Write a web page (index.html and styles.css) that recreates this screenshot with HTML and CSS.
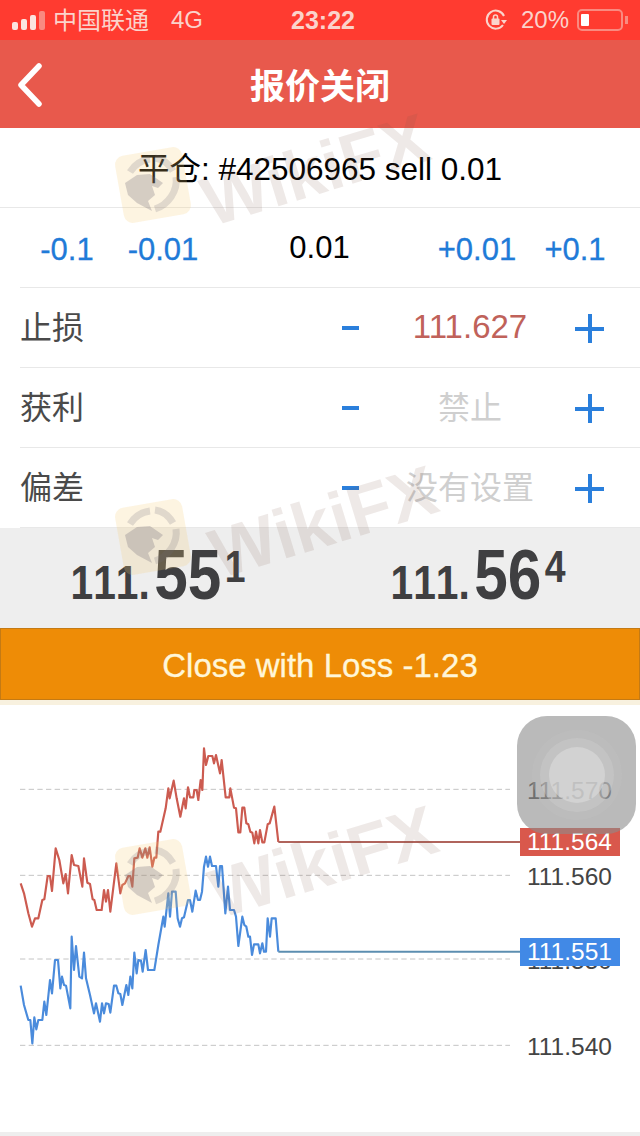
FILE: index.html
```html
<!DOCTYPE html>
<html lang="zh-CN">
<head>
    <meta charset="UTF-8">
    <meta name="viewport" content="width=device-width, initial-scale=1.0">
    <title>报价关闭</title>
    <link rel="stylesheet" href="styles.css">
</head>
<body>
    <svg class="defs" width="0" height="0">
        <symbol id="wm-eagle" viewBox="0 0 80 80">
            <rect x="6" y="6" width="68" height="68" rx="9" transform="rotate(-10 40 40)" fill="rgba(245, 205, 120, .22)"/>
            <g fill="none" stroke="rgba(110, 105, 120, .2)" stroke-width="7">
                <path d="M17 27C22 19 29 15 37 14"/>
                <path d="M42 13C50 14 56 19 60 26"/>
                <path d="M63 32C65 46 55 60 42 64"/>
            </g>
            <path d="M12 38 24 30 37 29 50 38 45 43 39 41 42 50 35 56 39 66 24 58 15 50Z" fill="rgba(110, 105, 120, .28)"/>
        </symbol>
    </svg>

    <div class="page">
        <div class="statusbar">
            <div class="status-left">
                <div class="signal"><i></i><i></i><i></i><i class="off"></i></div>
                <span class="carrier">中国联通</span>
                <span>4G</span>
            </div>
            <div class="time">23:22</div>
            <div class="status-right">
                <svg class="lock" width="24" height="24" viewBox="0 0 24 24">
                    <path d="M19 17A9 9 0 1 1 20 8" fill="none" stroke="currentColor" stroke-width="2"/>
                    <path d="M17 12h6l-3 4z" fill="currentColor"/>
                    <rect x="7.5" y="10.5" width="8" height="6.5" rx="1" fill="currentColor"/>
                    <path d="M9.5 11V9a2 2 0 0 1 4 0v2" fill="none" stroke="currentColor" stroke-width="1.5"/>
                </svg>
                <span>20%</span>
                <div class="battery"><div class="battery-level"></div></div>
            </div>
        </div>

        <div class="navbar">
            <svg class="back" width="28" height="44" viewBox="0 0 28 44">
                <path d="M23 3 5 22l18 19" fill="none" stroke="#fff" stroke-width="5.5" stroke-linecap="round" stroke-linejoin="round"/>
            </svg>
            <div class="nav-title">报价关闭</div>
        </div>

        <div class="order-title">平仓: #42506965 sell 0.01</div>

        <div class="volume-row">
            <div class="step">-0.1</div>
            <div class="step">-0.01</div>
            <div class="volume">0.01</div>
            <div class="step">+0.01</div>
            <div class="step">+0.1</div>
        </div>

        <div class="field-row">
            <div class="field-label">止损</div>
            <div class="minus"></div>
            <div class="field-value loss">111.627</div>
            <div class="plus"></div>
        </div>
        <div class="field-row">
            <div class="field-label">获利</div>
            <div class="minus"></div>
            <div class="field-value">禁止</div>
            <div class="plus"></div>
        </div>
        <div class="field-row">
            <div class="field-label">偏差</div>
            <div class="minus"></div>
            <div class="field-value">没有设置</div>
            <div class="plus"></div>
        </div>

        <div class="prices">
            <div class="price"><span>111.</span><span class="price-big">55</span><sup>1</sup></div>
            <div class="price"><span>111.</span><span class="price-big">56</span><sup>4</sup></div>
        </div>

        <div class="close-btn">Close with Loss -1.23</div>
        <div class="close-shadow"></div>

        <div class="chart">
            <svg class="chart-lines" width="640" height="427" viewBox="0 -15 1920 1281">
                <g class="grid-lines">
                    <line x1="60" y1="238" x2="1530" y2="238"/>
                    <line x1="60" y1="496" x2="1530" y2="496"/>
                    <line x1="60" y1="747" x2="1530" y2="747"/>
                    <line x1="60" y1="1006" x2="1530" y2="1006"/>
                </g>
                <polyline class="line-ask" points="62,520 72,550 85,610 96,650 105,625 115,625 127,570 133,568 143,498 150,498 156,543 167,415 178,450 190,520 197,492 204,550 215,435 222,465 235,468 247,530 252,445 262,518 270,522 278,568 283,570 290,600 305,600 312,540 318,575 324,540 331,605 349,460 361,550 367,525 375,520 385,498 391,498 397,530 403,445 413,443 419,415 427,443 436,415 442,443 449,412 457,470 463,443 469,443 475,365 481,365 497,295 505,235 509,265 521,212 530,265 541,320 552,265 557,295 564,232 570,262 580,262 583,240 590,240 595,270 602,210 607,240 612,115 618,165 625,138 637,138 642,160 648,135 660,190 665,150 677,262 688,262 691,235 702,293 708,295 715,367 721,367 727,293 733,293 739,340 745,343 751,365 757,368 763,400 768,365 775,400 780,360 787,397 793,397 803,343 809,340 823,290 835,396"/>
                <polyline class="line-bid" points="62,827 72,885 85,930 91,930 97,1000 103,922 109,958 115,930 127,930 133,875 139,915 150,810 156,850 165,750 174,750 181,835 186,800 192,825 198,827 211,895 215,680 222,780 228,708 238,800 246,805 252,728 258,805 270,855 282,910 288,880 300,935 306,880 312,910 318,880 326,882 331,908 342,827 349,827 355,850 361,852 367,885 379,825 385,855 391,800 397,835 403,728 410,790 415,750 423,752 428,785 437,720 444,780 463,780 475,705 490,620 494,650 505,550 510,620 516,545 527,545 533,625 540,650 546,625 552,622 564,570 570,570 577,605 587,542 594,570 600,570 606,545 612,470 618,440 624,470 630,440 636,468 648,468 655,530 660,468 666,468 676,610 684,530 690,600 702,600 708,620 715,708 727,620 733,645 739,650 745,680 750,680 756,735 762,703 775,703 780,730 787,700 792,725 798,725 803,625 810,680 815,625 827,625 835,725"/>
                <line class="last-ask" x1="835" y1="396" x2="1560" y2="396"/>
                <line class="last-bid" x1="835" y1="725" x2="1560" y2="725"/>
            </svg>
            <!-- y axis labels sit at the value they mark -->
            <div class="axis-label l570">111.570</div>
            <div class="axis-label l560">111.560</div>
            <div class="axis-label l550">111.550</div>
            <div class="axis-label l540">111.540</div>
            <div class="tag tag-ask">111.564</div>
            <div class="tag tag-bid">111.551</div>
        </div>
        <div class="bottom-strip"></div>
    </div>

    <div class="touch-btn">
        <div class="touch-ring3"><div class="touch-ring2"><div class="touch-ring1"></div></div></div>
    </div>

    <div class="wm wm1">
        <svg class="wm-logo" width="80" height="80"><use href="#wm-eagle"/></svg>
        <div class="wm-text">WikiFX</div>
    </div>
    <div class="wm wm2">
        <svg class="wm-logo" width="80" height="80"><use href="#wm-eagle"/></svg>
        <div class="wm-text">WikiFX</div>
    </div>
    <div class="wm wm3">
        <svg class="wm-logo" width="80" height="80"><use href="#wm-eagle"/></svg>
        <div class="wm-text">WikiFX</div>
    </div>
</body>
</html>
```

FILE: styles.css
```css
body {
    margin: 0;
    background: #fff;
    font-family: "Liberation Sans", "Noto Sans CJK SC", sans-serif;
    color: #000;
    overflow: hidden;
}
.defs {
    position: absolute;
}
.page {
    position: relative;
    width: 640px;
    height: 1136px;
    display: flex;
    flex-direction: column;
}
.statusbar {
    height: 40px;
    flex: none;
    box-sizing: border-box;
    background: #ff3b30;
    color: #fbd3cb;
    font-size: 24px;
    display: grid;
    grid-template-columns: 279px 67px 1fr;
    align-items: center;
    padding: 0 10px 0 12px;
}
.status-left {
    display: flex;
    align-items: center;
}
.signal {
    display: flex;
    align-items: flex-end;
    gap: 3px;
    height: 19px;
    margin-right: 8px;
}
.signal i {
    display: block;
    width: 6px;
    background: #fbe4df;
    border-radius: 2px;
}
.signal i:nth-child(1) { height: 8px; }
.signal i:nth-child(2) { height: 11px; }
.signal i:nth-child(3) { height: 15px; }
.signal i:nth-child(4) { height: 19px; }
.signal i.off { background: #f98a80; }
.carrier {
    font-size: 24px;
    margin: -4px 22px 0 0;
}
.time {
    font-weight: bold;
    font-size: 25px;
    white-space: nowrap;
}
.status-right {
    display: flex;
    align-items: center;
    justify-content: flex-end;
}
.lock {
    margin-right: 13px;
}
.battery {
    position: relative;
    width: 46px;
    height: 22px;
    margin: 0 7px 0 8px;
    box-sizing: border-box;
    border: 2px solid #f98a80;
    border-radius: 5px;
    padding: 3px 2px;
}
.battery::after {
    content: "";
    position: absolute;
    right: -7px;
    top: 5px;
    width: 3px;
    height: 8px;
    background: #f98a80;
}
.battery-level {
    width: 8px;
    height: 100%;
    background: #fff;
    border-radius: 1px;
}

.navbar {
    position: relative;
    height: 88px;
    flex: none;
    background: #e8594c;
    display: flex;
    align-items: center;
    justify-content: center;
}
.back {
    position: absolute;
    left: 16px;
    top: 23px;
}
.nav-title {
    color: #fff;
    font-size: 35px;
    font-weight: bold;
    margin-top: -2px;
}

.order-title {
    height: 80px;
    flex: none;
    box-sizing: border-box;
    border-bottom: 1px solid #e8e8e8;
    display: flex;
    align-items: center;
    justify-content: center;
    font-size: 31.5px;
    padding-bottom: 4px;
}

.volume-row {
    height: 80px;
    flex: none;
    box-sizing: border-box;
    display: grid;
    grid-template-columns: 96px 96px 1fr 98px 98px;
    align-items: center;
    padding: 3px 16px 0 19px;
    text-align: center;
    font-size: 31px;
    position: relative;
}
.volume-row::after {
    content: "";
    position: absolute;
    left: 20px;
    right: 0;
    bottom: 0;
    height: 1px;
    background: #e8e8e8;
}
.step {
    color: #1f7bd8;
    -webkit-text-stroke: .3px #1f7bd8;
}
.volume {
    margin-top: -3px;
}

.field-row {
    height: 80px;
    flex: none;
    box-sizing: border-box;
    margin-left: 20px;
    border-bottom: 1px solid #e8e8e8;
    display: grid;
    grid-template-columns: 1fr 30px 210px 30px 35px;
    align-items: center;
    font-size: 32px;
}
.field-row:last-of-type {
    border-bottom: none;
}
.field-label {
    color: #4a4a4a;
    margin-top: -6px;
}
.minus {
    width: 17px;
    height: 4px;
    background: #2a7fdc;
    justify-self: center;
    grid-column: 2;
}
.field-value {
    text-align: center;
    color: #cfcfcf;
    margin-top: -6px;
}
.field-value.loss {
    color: #c0625a;
    font-size: 33px;
    margin-top: -2px;
}
.plus {
    position: relative;
    width: 29px;
    height: 29px;
    margin-top: 2px;
}
.plus::before, .plus::after {
    content: "";
    position: absolute;
    background: #2a7fdc;
}
.plus::before {
    left: 0;
    right: 0;
    top: 13px;
    height: 3.5px;
}
.plus::after {
    top: 0;
    bottom: 0;
    left: 13px;
    width: 3.5px;
}

.prices {
    height: 100px;
    flex: none;
    background: #eee;
    display: grid;
    grid-template-columns: 1fr 1fr;
}
.price {
    display: flex;
    align-items: baseline;
    justify-content: center;
    padding-top: 17px;
    font-weight: bold;
    font-size: 48px;
    line-height: 60px;
    color: #3f3f41;
    font-kerning: none;
    transform: scaleX(.85);
    margin-left: -4px;
}
.price-big {
    font-size: 71px;
    margin-left: 5px;
}
.price sup {
    font-size: 44px;
    line-height: 0;
    position: relative;
    top: -17px;
    margin-left: 4px;
}

.close-btn {
    height: 72px;
    flex: none;
    box-sizing: border-box;
    background: #ee8c06;
    border: 1px solid #c47a14;
    color: #fff6d8;
    font-size: 33px;
    -webkit-text-stroke: .3px #fff6d8;
    padding-top: 3px;
    display: flex;
    align-items: center;
    justify-content: center;
}
.close-shadow {
    height: 5px;
    flex: none;
    background: #f8f1df;
}

.chart {
    position: relative;
    height: 427px;
    flex: none;
}
.chart-lines {
    display: block;
}
.grid-lines line {
    stroke: #c4c4c4;
    stroke-width: 3;
    stroke-dasharray: 16 10;
}
.line-ask, .line-bid {
    fill: none;
    stroke-width: 6.5;
    stroke-linejoin: round;
}
.line-ask { stroke: #cc5b50; }
.line-bid { stroke: #4a8bdc; }
.last-ask {
    stroke: #b0645c;
    stroke-width: 6;
}
.last-bid {
    stroke: #5c8eb0;
    stroke-width: 6;
}
.axis-label, .tag {
    position: absolute;
    font-size: 24.5px;
    line-height: 28px;
}
.axis-label {
    left: 527px;
    color: #444;
}
.l570 { top: 72px; }
.l560 { top: 158px; }
.l550 { top: 242px; }
.l540 { top: 328px; }
.tag {
    left: 520px;
    width: 100px;
    height: 28px;
    padding-left: 7px;
    box-sizing: border-box;
    color: #fff;
}
.tag-ask {
    top: 123px;
    background: #d9584c;
}
.tag-bid {
    top: 233px;
    background: #4189e6;
}
.bottom-strip {
    height: 4px;
    flex: none;
    background: #eee;
}

/* floating assistive button over the chart */
.touch-btn {
    position: absolute;
    left: 517px;
    top: 716px;
    width: 119px;
    height: 118px;
    border-radius: 30px;
    background: rgba(140, 140, 140, .6);
    display: flex;
    align-items: center;
    justify-content: center;
}
.touch-ring3, .touch-ring2, .touch-ring1 {
    border-radius: 50%;
    display: flex;
    align-items: center;
    justify-content: center;
}
.touch-ring3 {
    width: 90px;
    height: 90px;
    background: rgba(200, 200, 200, .2);
}
.touch-ring2 {
    width: 74px;
    height: 74px;
    background: rgba(210, 210, 210, .35);
}
.touch-ring1 {
    width: 56px;
    height: 56px;
    background: rgba(222, 222, 222, .55);
}

/* watermark over everything */
.wm {
    position: absolute;
    left: 113px;
    width: 340px;
    height: 80px;
    display: flex;
    align-items: center;
    pointer-events: none;
}
.wm1 { top: 145px; }
.wm2 { top: 497px; }
.wm3 { top: 837px; }
.wm-logo {
    flex: none;
}
.wm-text {
    margin-left: 14px;
    margin-top: -30px;
    font-size: 70px;
    font-weight: bold;
    color: rgba(120, 85, 70, .13);
    transform: rotate(-17deg);
}
.wm1 .wm-text {
    margin-left: 6px;
}
```
